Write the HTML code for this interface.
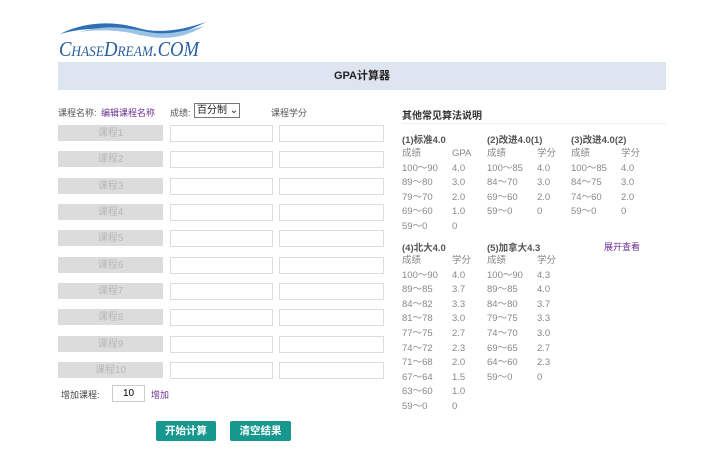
<!DOCTYPE html>
<html><head><meta charset="utf-8"><style>
body{margin:0;width:720px;height:466px;background:#fff;font-family:"Liberation Sans","Noto Sans CJK SC",sans-serif;position:relative;overflow:hidden}
.a{position:absolute;white-space:nowrap}
.lab{position:absolute;left:58px;width:105px;height:16px;background:#dcdcdc;color:#b8b8b8;font-size:10px;text-align:center;line-height:18px}
.in{position:absolute;height:15px;border:1px solid #ddd;background:#fff}
.t{position:absolute;font-size:9.5px;color:#888}
.h{position:absolute;font-size:9.5px;color:#555;font-weight:bold}
.btn{position:absolute;top:421px;height:20px;background:#16988f;color:#fff;font-size:10.5px;font-weight:bold;text-align:center;line-height:20px;border-radius:2px}
</style></head><body>
<svg class="a" style="left:58px;top:18px" width="150" height="40" viewBox="0 0 150 40">
<path d="M2 16 C30 2,60 4,80 10 C100 16,125 12,148 4 C125 16,100 22,78 16 C58 10,30 8,2 16Z" fill="#2f6fb3"/>
<path d="M20 14 C50 6,70 10,90 14 C110 18,130 12,146 8 C128 20,105 22,88 18 C70 14,50 10,20 14Z" fill="#9cc3e6"/>
<text x="1" y="38" font-family="Liberation Serif,serif" font-style="italic" font-size="21" style="font-variant:small-caps" fill="#2a5f9e" textLength="140" lengthAdjust="spacingAndGlyphs">ChaseDream.COM</text>
</svg>
<div class="a" style="left:58px;top:62px;width:608px;height:28px;background:#dde5f0;text-align:center;line-height:28px;font-size:11px;font-weight:bold;color:#222">GPA计算器</div>
<div class="a" style="left:58px;top:106px;font-size:9px;color:#555">课程名称:</div>
<div class="a" style="left:101px;top:106px;font-size:9px;color:#6a2f8f">编辑课程名称</div>
<div class="a" style="left:170px;top:106px;font-size:9px;color:#555">成绩:</div>
<div class="a" style="left:194px;top:103px;width:42px;height:13px;border:1px solid #777;font-size:10px;line-height:13px;padding-left:2px;color:#222">百分制 ⌄</div>
<div class="a" style="left:271px;top:106px;font-size:9px;color:#555">课程学分</div>

<div class="lab" style="top:125px">课程1</div><div class="in" style="left:170px;top:125px;width:101px"></div><div class="in" style="left:279px;top:125px;width:103px"></div>
<div class="lab" style="top:151px">课程2</div><div class="in" style="left:170px;top:151px;width:101px"></div><div class="in" style="left:279px;top:151px;width:103px"></div>
<div class="lab" style="top:178px">课程3</div><div class="in" style="left:170px;top:178px;width:101px"></div><div class="in" style="left:279px;top:178px;width:103px"></div>
<div class="lab" style="top:204px">课程4</div><div class="in" style="left:170px;top:204px;width:101px"></div><div class="in" style="left:279px;top:204px;width:103px"></div>
<div class="lab" style="top:230px">课程5</div><div class="in" style="left:170px;top:230px;width:101px"></div><div class="in" style="left:279px;top:230px;width:103px"></div>
<div class="lab" style="top:257px">课程6</div><div class="in" style="left:170px;top:257px;width:101px"></div><div class="in" style="left:279px;top:257px;width:103px"></div>
<div class="lab" style="top:283px">课程7</div><div class="in" style="left:170px;top:283px;width:101px"></div><div class="in" style="left:279px;top:283px;width:103px"></div>
<div class="lab" style="top:309px">课程8</div><div class="in" style="left:170px;top:309px;width:101px"></div><div class="in" style="left:279px;top:309px;width:103px"></div>
<div class="lab" style="top:336px">课程9</div><div class="in" style="left:170px;top:336px;width:101px"></div><div class="in" style="left:279px;top:336px;width:103px"></div>
<div class="lab" style="top:362px">课程10</div><div class="in" style="left:170px;top:362px;width:101px"></div><div class="in" style="left:279px;top:362px;width:103px"></div>

<div class="a" style="left:61px;top:388px;font-size:9px;color:#444">增加课程:</div>
<div class="a" style="left:112px;top:385px;width:31px;height:15px;border:1px solid #ccc;font-size:10px;text-align:center;line-height:15px">10</div>
<div class="a" style="left:151px;top:388px;font-size:9px;color:#6a2f8f">增加</div>
<div class="btn" style="left:156px;width:60px">开始计算</div>
<div class="btn" style="left:230px;width:61px">清空结果</div>

<div class="a" style="left:402px;top:107px;font-size:10px;font-weight:bold;color:#333">其他常见算法说明</div>
<div class="a" style="left:402px;top:123px;width:264px;height:1px;background:#eee"></div>

<div class="h" style="left:402px;top:132px">(1)标准4.0</div>
<div class="h" style="left:487px;top:132px">(2)改进4.0(1)</div>
<div class="h" style="left:571px;top:132px">(3)改进4.0(2)</div>
<div class="t" style="left:402px;top:147px;line-height:14.6px">成绩<br>100～90<br>89～80<br>79～70<br>69～60<br>59～0</div>
<div class="t" style="left:452px;top:147px;line-height:14.6px">GPA<br>4.0<br>3.0<br>2.0<br>1.0<br>0</div>
<div class="t" style="left:487px;top:147px;line-height:14.6px">成绩<br>100～85<br>84～70<br>69～60<br>59～0</div>
<div class="t" style="left:537px;top:147px;line-height:14.6px">学分<br>4.0<br>3.0<br>2.0<br>0</div>
<div class="t" style="left:571px;top:147px;line-height:14.6px">成绩<br>100～85<br>84～75<br>74～60<br>59～0</div>
<div class="t" style="left:621px;top:147px;line-height:14.6px">学分<br>4.0<br>3.0<br>2.0<br>0</div>

<div class="h" style="left:402px;top:240px">(4)北大4.0</div>
<div class="h" style="left:487px;top:240px">(5)加拿大4.3</div>
<div class="a" style="left:604px;top:240px;font-size:9px;color:#6a2f8f">展开查看</div>
<div class="t" style="left:402px;top:254px;line-height:14.6px">成绩<br>100～90<br>89～85<br>84～82<br>81～78<br>77～75<br>74～72<br>71～68<br>67～64<br>63～60<br>59～0</div>
<div class="t" style="left:452px;top:254px;line-height:14.6px">学分<br>4.0<br>3.7<br>3.3<br>3.0<br>2.7<br>2.3<br>2.0<br>1.5<br>1.0<br>0</div>
<div class="t" style="left:487px;top:254px;line-height:14.6px">成绩<br>100～90<br>89～85<br>84～80<br>79～75<br>74～70<br>69～65<br>64～60<br>59～0</div>
<div class="t" style="left:537px;top:254px;line-height:14.6px">学分<br>4.3<br>4.0<br>3.7<br>3.3<br>3.0<br>2.7<br>2.3<br>0</div>
</body></html>
